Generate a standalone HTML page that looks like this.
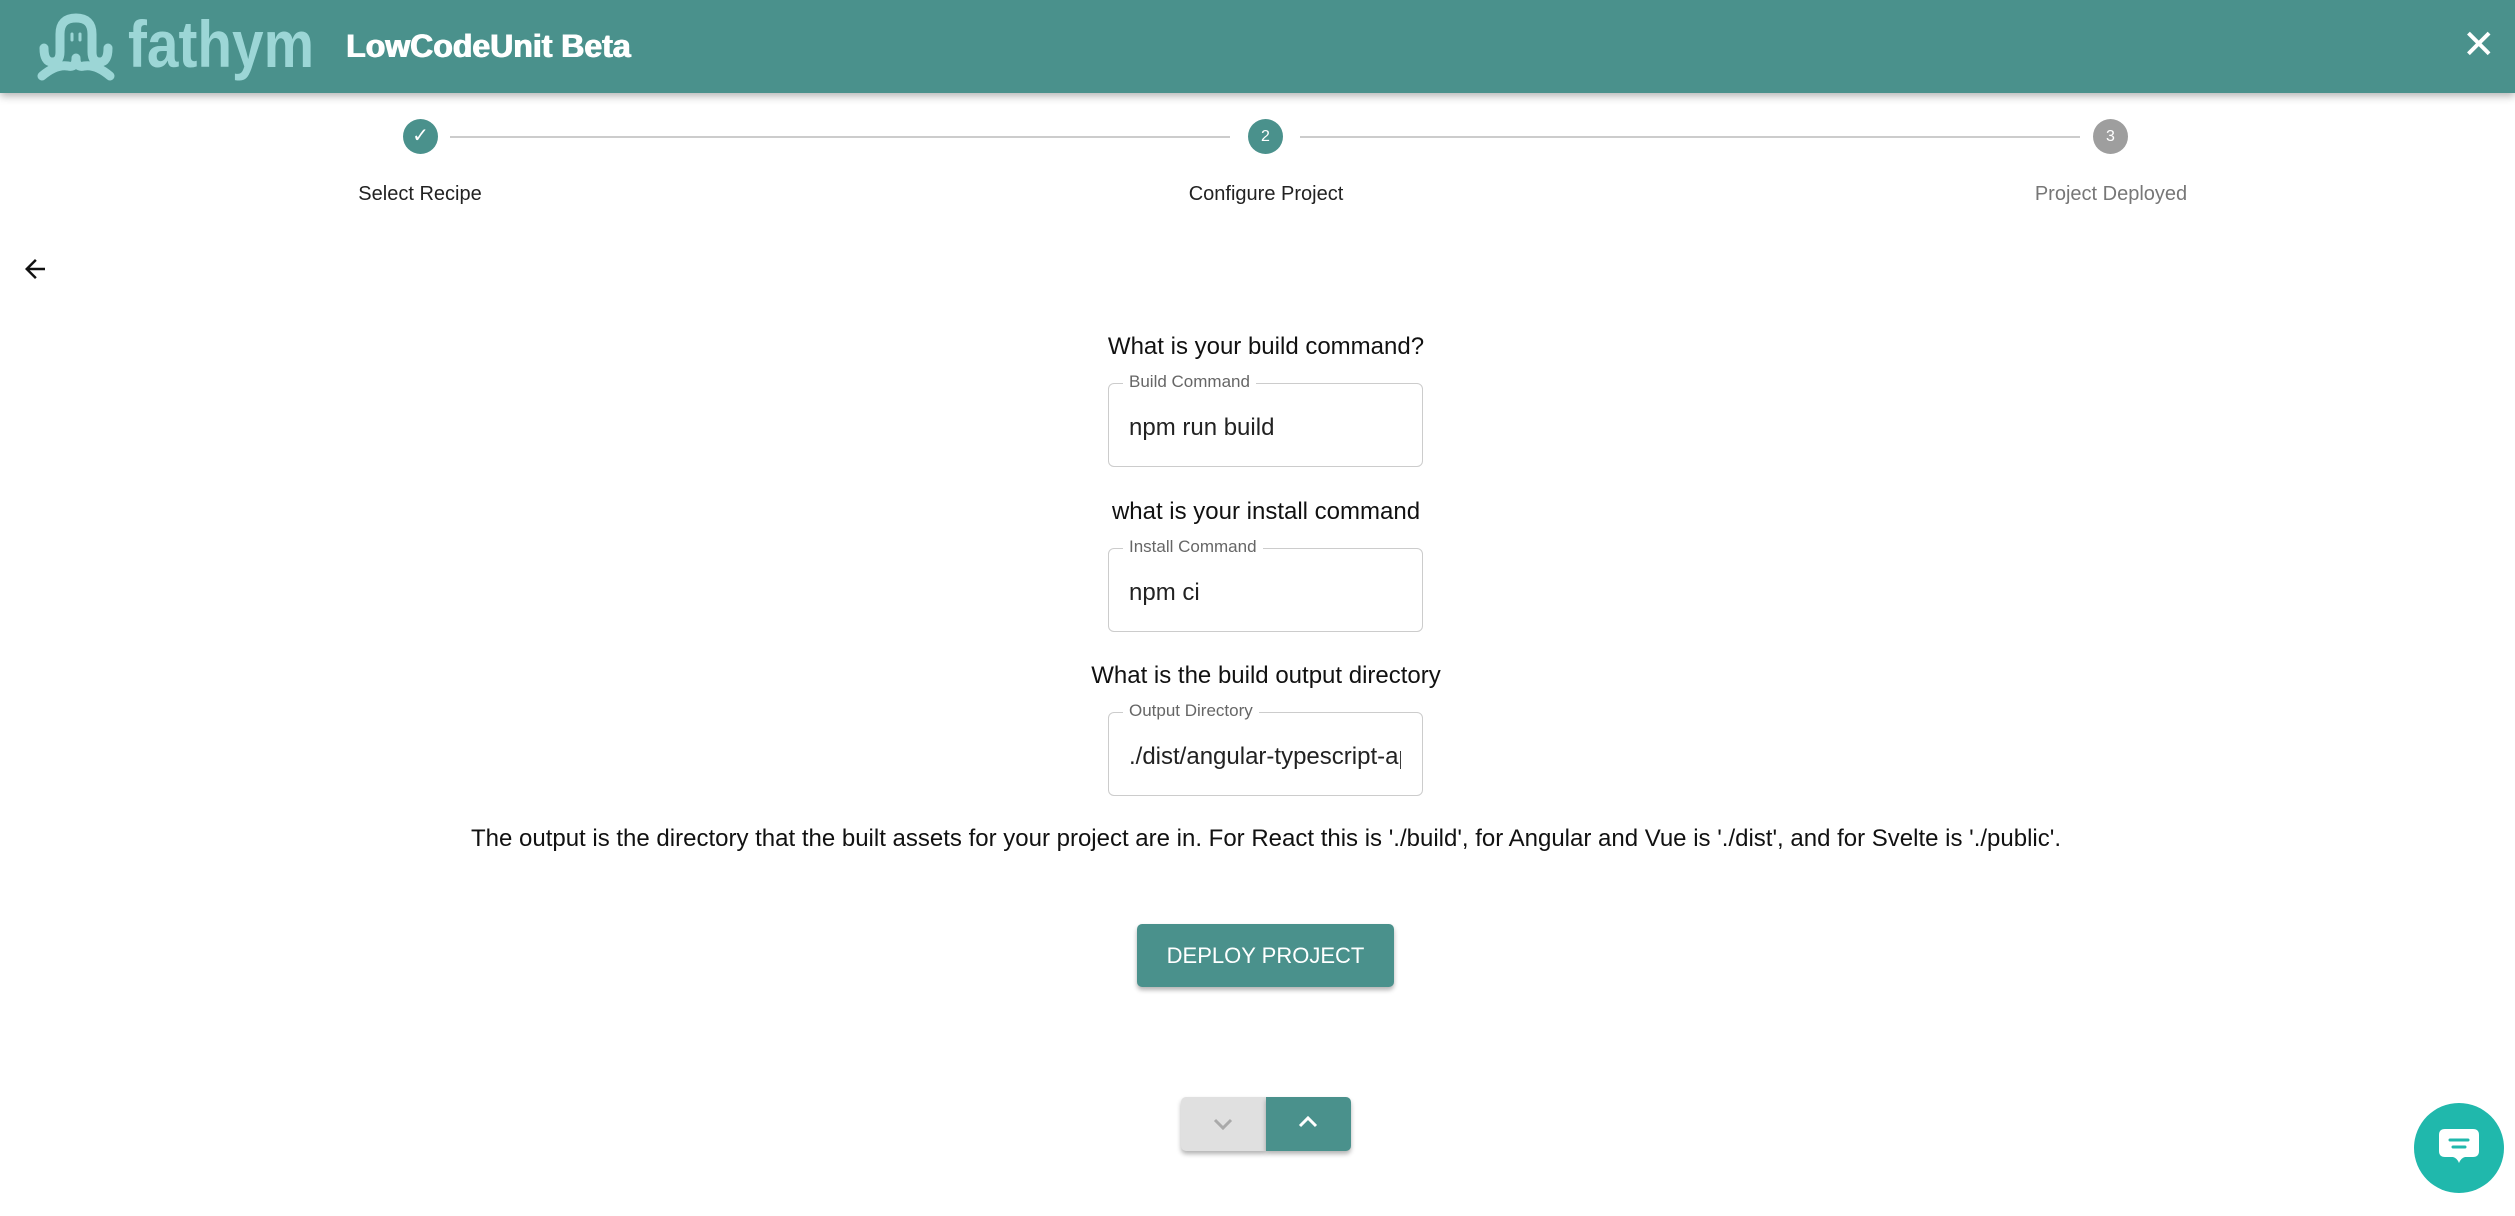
<!DOCTYPE html>
<html><head><meta charset="utf-8"><style>
body{margin:0;width:2515px;height:1216px;background:#fff;font-family:"Liberation Sans",sans-serif;position:relative;overflow:hidden;color:#222}
.hdr{position:absolute;left:0;top:0;width:2515px;height:93px;background:#4a918c;box-shadow:0 3px 8px rgba(0,0,0,.3)}
.abs{position:absolute}
.circ{position:absolute;width:35px;height:35px;border-radius:50%;color:#fff;font-size:16px;text-align:center;line-height:35px}
.lbl{position:absolute;font-size:20px;transform:translateX(-50%);white-space:nowrap}
.q{position:absolute;left:0;width:2532px;text-align:center;font-size:24px;color:#111}
.box{position:absolute;left:1108px;width:313px;height:82px;border:1.5px solid #ccc;border-radius:6px}
.box .l{position:absolute;top:-12px;left:14px;background:#fff;padding:0 6px;font-size:17px;color:#666}
.box .v{position:absolute;left:20px;top:30px;font-size:24px;color:#222;white-space:nowrap;overflow:hidden;width:280px}
</style></head><body>
<div class="hdr">
<svg class="abs" style="left:36px;top:12px" width="90" height="70" viewBox="0 0 90 70" fill="none" stroke="#9cd6d6" stroke-width="9" stroke-linecap="round"><path d="M8 36 Q8 50 16 50 Q24 50 24 40 L24 22 Q24 6 40 6 Q56 6 56 22 L56 40 Q56 50 64 50 Q72 50 72 36"/><path d="M6 64 Q20 52 32 54 Q40 56 40 46 M40 46 Q40 56 48 54 Q60 52 74 64"/><path d="M36 22 v6 M44 22 v6" stroke-width="3"/></svg>
<div class="abs" style="left:128px;top:6px;font-size:66px;font-weight:bold;color:#9cd6d6;transform:scaleX(0.86);transform-origin:left">fathym</div>
<div class="abs" style="left:346px;top:28px;font-size:32px;font-weight:900;color:#fff;text-shadow:0.8px 0 0 #fff,-0.4px 0 0 #fff">LowCodeUnit Beta</div>
<div class="abs" style="left:2462px;top:22px;font-size:40px;color:#fff">✕</div>
</div>
<div class="abs" style="left:450px;top:136px;width:780px;height:2px;background:#ccc"></div>
<div class="abs" style="left:1300px;top:136px;width:780px;height:2px;background:#ccc"></div>
<div class="circ" style="left:403px;top:119px;background:#4a918c;font-size:20px">✓</div>
<div class="circ" style="left:1248px;top:119px;background:#4a918c">2</div>
<div class="circ" style="left:2093px;top:119px;background:#9e9e9e">3</div>
<div class="lbl" style="left:420px;top:183px">Select Recipe</div>
<div class="lbl" style="left:1266px;top:183px">Configure Project</div>
<div class="lbl" style="left:2111px;top:183px;color:#777">Project Deployed</div>
<svg class="abs" style="left:20px;top:254px" width="30" height="30" viewBox="0 0 24 24"><path d="M20 11H7.8l5.6-5.6L12 4l-8 8 8 8 1.4-1.4L7.8 13H20z" fill="#111"/></svg>
<div class="q" style="top:333px">What is your build command?</div>
<div class="box" style="top:383px"><span class="l">Build Command</span><span class="v">npm run build</span></div>
<div class="q" style="top:498px">what is your install command</div>
<div class="box" style="top:548px"><span class="l">Install Command</span><span class="v">npm ci</span></div>
<div class="q" style="top:662px">What is the build output directory</div>
<div class="box" style="top:712px"><span class="l">Output Directory</span><span class="v" style="width:272px">./dist/angular-typescript-app</span></div>
<div class="q" style="top:825px">The output is the directory that the built assets for your project are in. For React this is './build', for Angular and Vue is './dist', and for Svelte is './public'.</div>
<div class="abs" style="left:1137px;top:924px;width:257px;height:63px;background:#4a918c;border-radius:5px;box-shadow:0 3px 5px rgba(0,0,0,.3);color:#fff;font-size:22px;text-align:center;line-height:63px">DEPLOY PROJECT</div>
<div class="abs" style="left:1181px;top:1097px;width:85px;height:54px;background:#e0e0e0;border-radius:5px 0 0 5px;box-shadow:0 3px 5px rgba(0,0,0,.3)"><svg style="margin:20px 0 0 31px" width="22" height="14" viewBox="0 0 22 14"><path d="M3 3l8 8 8-8" stroke="#aaa" stroke-width="3" fill="none"/></svg></div>
<div class="abs" style="left:1266px;top:1097px;width:85px;height:54px;background:#4a918c;border-radius:0 5px 5px 0;box-shadow:0 3px 5px rgba(0,0,0,.3)"><svg style="margin:18px 0 0 31px" width="22" height="14" viewBox="0 0 22 14"><path d="M3 11l8-8 8 8" stroke="#fff" stroke-width="3" fill="none"/></svg></div>
<div class="abs" style="left:2414px;top:1103px;width:90px;height:90px;border-radius:50%;background:#20b8ac"><svg style="margin:24px 0 0 23px" width="44" height="42" viewBox="0 0 44 42"><path d="M8 2h28q6 0 6 6v16q0 6-6 6h-8q-4 1-6 6q-2-5-6-6H8q-6 0-6-6V8q0-6 6-6z" fill="#fff"/><path d="M13 13h18M16 20h12" stroke="#20b8ac" stroke-width="3" stroke-linecap="round"/></svg></div>
</body></html>
